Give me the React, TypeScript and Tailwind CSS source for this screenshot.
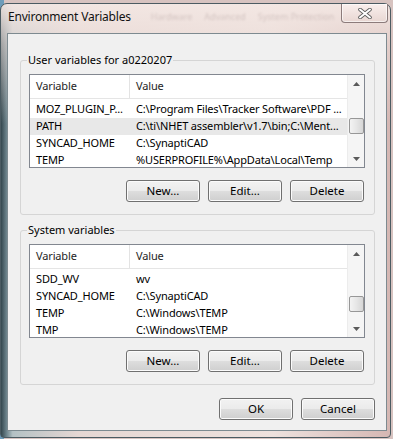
import React from "react";

/*
 * Windows 7 "Environment Variables" dialog: glass frame, two group boxes
 * holding a two-column list view with a scrollbar, and command buttons.
 */

type Row = { name: string; value: string; selected?: boolean };

const userVars: Row[] = [
  { name: "MOZ_PLUGIN_P...", value: "C:\\Program Files\\Tracker Software\\PDF ..." },
  { name: "PATH", value: "C:\\ti\\NHET assembler\\v1.7\\bin;C:\\Ment...", selected: true },
  { name: "SYNCAD_HOME", value: "C:\\SynaptiCAD" },
  { name: "TEMP", value: "%USERPROFILE%\\AppData\\Local\\Temp" },
];

const systemVars: Row[] = [
  { name: "SDD_WV", value: "wv" },
  { name: "SYNCAD_HOME", value: "C:\\SynaptiCAD" },
  { name: "TEMP", value: "C:\\Windows\\TEMP" },
  { name: "TMP", value: "C:\\Windows\\TEMP" },
];

function Btn({ label }: { label: string }) {
  return (
    <button
      type="button"
      className="h-[22px] w-[74px] rounded-[3px] border border-[#707070] bg-[linear-gradient(to_bottom,#f2f2f2_0%,#ebebeb_48%,#dddddd_52%,#cfcfcf_100%)] text-[11.5px] leading-none text-black shadow-[inset_0_0_0_1px_#fbfbfb]"
    >
      {label}
    </button>
  );
}

function Arrow({ up }: { up?: boolean }) {
  return (
    <div className="flex h-[17px] shrink-0 items-center justify-center">
      <svg width="7" height="4" viewBox="0 0 7 4" aria-hidden="true">
        <path d={up ? "M0 4L3.5 0L7 4Z" : "M0 0L3.5 4L7 0Z"} fill="#5a5a5a" />
      </svg>
    </div>
  );
}

function VarList({ rows, thumb }: { rows: Row[]; thumb: string }) {
  return (
    <div className="flex h-[94px] border border-[#828790] bg-white tracking-[-0.15px]">
      <div className="flex min-w-0 flex-1 flex-col overflow-hidden">
        <div className="flex h-[24px] shrink-0 border-b border-[#e5e5e5] text-[#1e1e1e]">
          <div className="flex w-[100px] shrink-0 items-center border-r border-[#e3e3e3] pl-[6px]">Variable</div>
          <div className="flex items-center pl-[6px]">Value</div>
        </div>
        <div className="flex flex-col pt-[2px]">
          {rows.map((r) => (
            <div
              key={r.name + r.value}
              className={`flex h-[17px] shrink-0 items-center whitespace-nowrap ${r.selected ? "bg-[#e8e8e8]" : ""}`}
            >
              <div className="w-[100px] shrink-0 overflow-hidden pl-[6px]">{r.name}</div>
              <div className="pl-[6px]">{r.value}</div>
            </div>
          ))}
        </div>
      </div>
      {/* vertical scrollbar */}
      <div className="flex w-[17px] shrink-0 flex-col border-l border-[#ececec] bg-[#f5f5f5]">
        <Arrow up />
        <div className="flex-1">
          <div className={`mx-auto h-[16px] w-[15px] rounded-[2px] border border-[#979797] bg-[linear-gradient(to_right,#f3f3f3,#e6e6e6_50%,#d6d6d6)] ${thumb}`} />
        </div>
        <Arrow />
      </div>
    </div>
  );
}

function Group({ title, rows, thumb, className }: { title: string; rows: Row[]; thumb: string; className: string }) {
  return (
    <fieldset className={`rounded-[3px] border border-[#d5d5d5] pb-[12px] pl-[8px] pr-[9px] pt-[6px] ${className}`}>
      <legend className="-ml-[2px] px-[1px] text-[11px] leading-[16px] text-black">{title}</legend>
      <VarList rows={rows} thumb={thumb} />
      <div className="mt-[12px] flex justify-end gap-[8px] pr-[1px]">
        <Btn label="New..." />
        <Btn label="Edit..." />
        <Btn label="Delete" />
      </div>
    </fieldset>
  );
}

export default function App() {
  return (
    <div className="h-[439px] w-[393px] overflow-hidden bg-[linear-gradient(to_right,#6d9cba_0px,#6d9cba_4px,#d7c3c0_4px)] font-['Noto_Sans',sans-serif] text-[11px] text-black">
      <div className="mt-[3px] flex h-[435px] w-[391px] flex-col rounded-t-[7px] rounded-b-[4px] border border-[#4b5b62] bg-[linear-gradient(to_bottom,rgba(243,231,227,0.95)_0px,rgba(236,222,218,0.6)_40px,rgba(236,222,218,0)_120px),linear-gradient(to_right,#34474e_0%,#6f868e_1.5%,#b4c1c4_3%,#e6d7d3_20%,#eee1dd_70%,#d5b7b3_100%)]">
        {/* title bar */}
        <div className="flex h-[29px] shrink-0 items-start whitespace-nowrap">
          <div className="shrink-0 pl-[7px] pt-[5px] text-[12px] leading-[16px] tracking-[-0.2px] text-[#111]">Environment Variables</div>
          <div className="ml-[20px] flex shrink-0 gap-[12px] pt-[6px] text-[9px] text-[#7a6464] opacity-25 blur-[1.2px]">
            <span>Hardware</span>
            <span>Advanced</span>
            <span>System Protection</span>
          </div>
          <div className="ml-auto mr-[2px] flex h-[19px] w-[47px] shrink-0 items-center justify-center rounded-b-[4px] border border-t-0 border-[#8c7b7b] bg-[linear-gradient(to_bottom,rgba(250,240,238,0.95),rgba(232,214,210,0.95))] shadow-[inset_0_0_0_1px_rgba(255,255,255,0.6)]">
            <svg width="14" height="11" viewBox="0 0 14 11" aria-hidden="true">
              <path d="M2 1.5L12 9.5M12 1.5L2 9.5" stroke="#5b5b5b" strokeWidth="3.6" strokeLinecap="round" />
              <path d="M2 1.5L12 9.5M12 1.5L2 9.5" stroke="#ffffff" strokeWidth="2" strokeLinecap="round" />
            </svg>
          </div>
        </div>

        {/* client area */}
        <div className="ml-[6px] mr-[3px] flex h-[398px] shrink-0 flex-col border border-[#7d8a90] bg-[#f0f0f0] pl-[12px] pr-[11px]">
          <Group title="User variables for a0220207" rows={userVars} thumb="mt-[26px]" className="mt-[18px]" />
          <Group title="System variables" rows={systemVars} thumb="mt-[34px]" className="mt-[7px]" />
          <div className="mt-[13px] flex justify-end gap-[8px]">
            <Btn label="OK" />
            <Btn label="Cancel" />
          </div>
        </div>
      </div>
    </div>
  );
}
